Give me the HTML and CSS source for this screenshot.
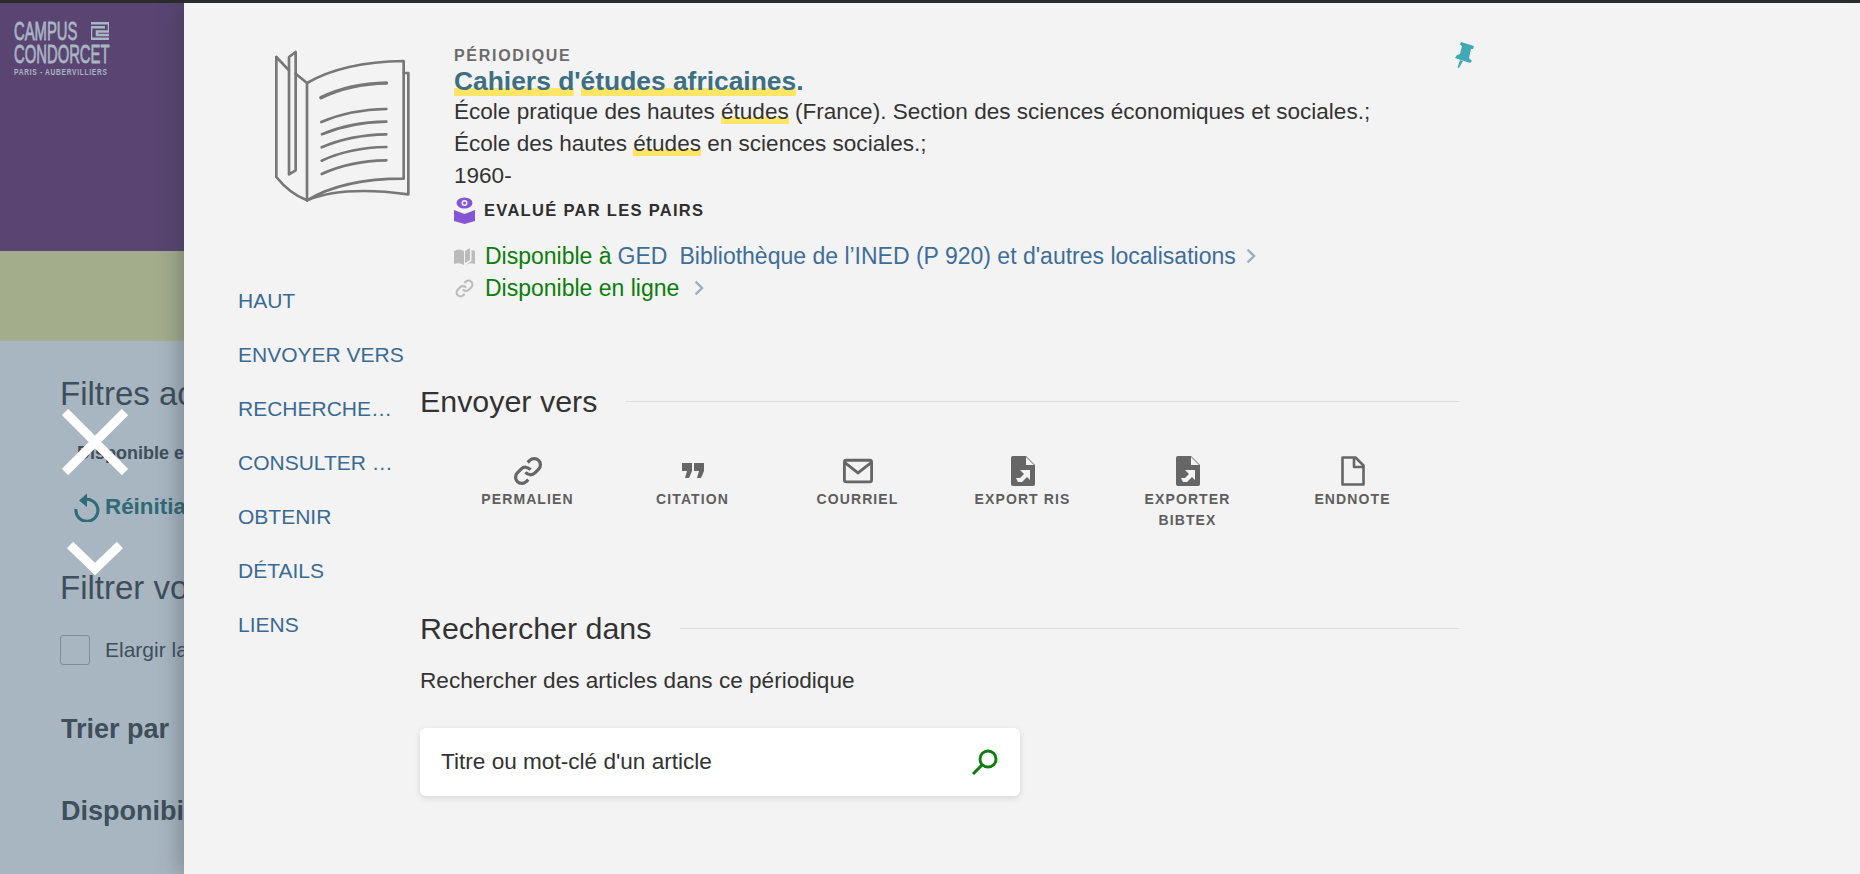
FILE: index.html
```html
<!DOCTYPE html>
<html lang="fr">
<head>
<meta charset="utf-8">
<title>Cahiers d'études africaines</title>
<link rel="stylesheet" href="styles.css">
</head>
<body>
<div class="backdrop">
  <div class="topbar"></div>
  <header class="brand">
    <div class="logo">
      <div class="logo-row"><span class="logo-campus">CAMPUS</span>
        <svg class="logo-mark" viewBox="0 0 18 18" fill="none" stroke="#a9b6c4" stroke-width="2.600"><path d="M0 1.300H18V9.500H6V13H18M0 5.300H14M0 5.300V16.700H18"/></svg>
      </div>
      <div class="logo-condorcet">CONDORCET</div>
      <div class="logo-sub">PARIS - AUBERVILLIERS</div>
    </div>
  </header>
  <div class="band"></div>
  <section class="filters">
    <h2 class="f-title">Filtres actifs</h2>
    <div class="f-chip">Disponible en ligne</div>
    <div class="f-reset">
      <svg class="f-reset-icon" viewBox="0 0 26 30" fill="none" stroke="#2f6a76" stroke-width="3"><path d="M8 8.500A11 11 0 1 1 2 17"/><path d="M13 1.500V15L5 8.500Z" fill="#2f6a76" stroke="none"/></svg>
      <span>Réinitialiser</span>
    </div>
    <h2 class="f-title f-title2">Filtrer vos résultats</h2>
    <label class="f-check"><span class="f-box"></span>Elargir la recherche</label>
    <div class="f-head f-sort">Trier par</div>
    <div class="f-head f-dispo">Disponibilité</div>
  </section>
</div>

<svg class="close-x" viewBox="0 0 66 66" stroke="#fff" stroke-width="9" fill="none"><path d="M3 3L63 63M63 3L3 63"/></svg>
<svg class="close-v" viewBox="0 0 56 34" stroke="#fff" stroke-width="9" fill="none"><path d="M3 3L28 27L53 3"/></svg>

<main class="panel">
  <div class="side">
    <svg class="book" viewBox="130 50 420 480" fill="none" stroke="#777" stroke-width="8" stroke-linejoin="round" stroke-linecap="round">
      <path d="M140 80V440Q180 490 232 510"/>
      <path d="M140 80L178 120"/>
      <path d="M178 80L198 65V420L178 432Z"/>
      <path d="M198 130L232 158V510"/>
      <path d="M232 158Q340 95 522 92V445Q340 445 232 510"/>
      <path d="M522 128H536V492Q340 465 232 510"/>
      <path d="M274 202Q360 160 470 158" stroke-width="11"/>
      <path d="M275 275Q360 238 470 236"/>
      <path d="M277 312Q360 276 470 274"/>
      <path d="M276 351Q360 314 470 312"/>
      <path d="M276 391Q360 352 470 350"/>
      <path d="M276 431Q360 392 470 390"/>
    </svg>
    <nav class="nav">
      <a class="nav-item">HAUT</a>
      <a class="nav-item">ENVOYER VERS</a>
      <a class="nav-item">RECHERCHER DANS</a>
      <a class="nav-item">CONSULTER EN LIGNE</a>
      <a class="nav-item">OBTENIR</a>
      <a class="nav-item">DÉTAILS</a>
      <a class="nav-item">LIENS</a>
    </nav>
  </div>

  <div class="content">
    <article class="record">
      <svg class="pin" viewBox="0 0 22 28" fill="#3fa9b5"><path d="M8 1L21 5L20 8L18 8L16 17L19 20L17 22L2 17L4 14L7 13L9 5L7 3.500Z"/><path d="M7 19L10 20L6 27L4.500 26.500Z"/></svg>
      <div class="rec-type">PÉRIODIQUE</div>
      <h1 class="rec-title"><mark>Cahiers d</mark>'<mark>études africaines</mark>.</h1>
      <div class="rec-line">École pratique des hautes <mark>études</mark> (France). Section des sciences économiques et sociales.;</div>
      <div class="rec-line">École des hautes <mark>études</mark> en sciences sociales.;</div>
      <div class="rec-line">1960-</div>
      <div class="peer">
        <svg class="peer-icon" viewBox="0 0 21 27"><path d="M0 13L10.500 17L21 13V24L10.500 27L0 24Z" fill="#8456d6"/><ellipse cx="10.500" cy="6" rx="8" ry="5.500" fill="#8456d6"/><circle cx="10.500" cy="6" r="3" fill="#f3f3f3"/><circle cx="10.500" cy="6" r="1.500" fill="#8456d6"/></svg>
        <span>EVALUÉ PAR LES PAIRS</span>
      </div>
      <div class="avail avail-first">
        <svg class="avail-icon" viewBox="0 0 21 17" fill="#bbb"><path d="M0 3Q5 0 10 3V17Q5 14 0 16Z"/><path d="M11 3L16 0V12L11 15Z"/><path d="M17.500 2L21 3V16Q16 14 11.500 17L17.500 13Z"/></svg>
        <span class="green">Disponible à</span><span class="blue ged">GED</span><span class="blue lib">Bibliothèque de l’INED (P 920) et d'autres localisations</span>
        <svg class="chev" viewBox="0 0 10 16" fill="none" stroke="#96afc4" stroke-width="2.400"><path d="M1.500 1.500L8 8L1.500 14.500"/></svg>
      </div>
      <div class="avail">
        <svg class="avail-icon avail-link" viewBox="0 0 24 24" fill="none" stroke="#bbb" stroke-width="2.600"><path d="M10 13a5 5 0 0 0 7.540.540l3-3a5 5 0 0 0-7.070-7.070l-1.720 1.710"/><path d="M14 11a5 5 0 0 0-7.540-.540l-3 3a5 5 0 0 0 7.070 7.070l1.710-1.710"/></svg>
        <span class="green">Disponible en ligne</span>
        <svg class="chev chev2" viewBox="0 0 10 16" fill="none" stroke="#96afc4" stroke-width="2.400"><path d="M1.500 1.500L8 8L1.500 14.500"/></svg>
      </div>
    </article>

    <section class="send">
      <h2 class="sec-head"><span>Envoyer vers</span></h2>
      <div class="actions">
        <div class="action">
          <svg class="act-icon" viewBox="0 0 24 24" fill="none" stroke="#666" stroke-width="2.600"><path d="M10 13a5 5 0 0 0 7.540.540l3-3a5 5 0 0 0-7.070-7.070l-1.720 1.710"/><path d="M14 11a5 5 0 0 0-7.540-.540l-3 3a5 5 0 0 0 7.070 7.070l1.710-1.710"/></svg>
          <span>PERMALIEN</span>
        </div>
        <div class="action">
          <svg class="act-icon" viewBox="-4 -7 30 30" fill="#666"><path d="M0 0H10V8L7 15H3L5 8H0Z"/><path d="M12 0H22V8L19 15H15L17 8H12Z"/></svg>
          <span>CITATION</span>
        </div>
        <div class="action">
          <svg class="act-icon" viewBox="0 0 32 32" fill="none" stroke="#666" stroke-width="3"><rect x="1.500" y="4.500" width="29" height="23" rx="2"/><path d="M2 7L16 18L30 7"/></svg>
          <span>COURRIEL</span>
        </div>
        <div class="action">
          <svg class="act-icon" viewBox="0 0 24 30"><path d="M2 0H15L24 9V28Q24 30 22 30H2Q0 30 0 28V2Q0 0 2 0Z" fill="#666"/><path d="M15 1L23 9H15Z" fill="#f3f3f3"/><path d="M9 14H19V24L16 21L11 26H7L5 22H9L13 18Z" fill="#f3f3f3"/></svg>
          <span>EXPORT RIS</span>
        </div>
        <div class="action">
          <svg class="act-icon" viewBox="0 0 24 30"><path d="M2 0H15L24 9V28Q24 30 22 30H2Q0 30 0 28V2Q0 0 2 0Z" fill="#666"/><path d="M15 1L23 9H15Z" fill="#f3f3f3"/><path d="M9 14H19V24L16 21L11 26H7L5 22H9L13 18Z" fill="#f3f3f3"/></svg>
          <span>EXPORTER BIBTEX</span>
        </div>
        <div class="action">
          <svg class="act-icon" viewBox="0 0 24 30" fill="none" stroke="#666" stroke-width="2.600" stroke-linejoin="round"><path d="M2.500 1.500H14.500L22.500 9.500V28.500H1.500V1.500Z"/><path d="M13 1.500V11H23"/></svg>
          <span>ENDNOTE</span>
        </div>
      </div>
    </section>

    <section class="search-sec">
      <h2 class="sec-head"><span>Rechercher dans</span></h2>
      <p class="search-hint">Rechercher des articles dans ce périodique</p>
      <div class="search-box">
        <span>Titre ou mot-clé d'un article</span>
        <svg class="search-icon" viewBox="0 0 27 27" fill="none" stroke="#0a7d0a" stroke-width="2.800"><circle cx="17" cy="10" r="8"/><path d="M11 16L2 25" stroke-width="3"/></svg>
      </div>
    </section>
  </div>
</main>
</body>
</html>
```
FILE: styles.css
```css
* { box-sizing: border-box; }
html, body { margin: 0; height: 874px; overflow: hidden; }
body { font-family: "Liberation Sans", Arial, sans-serif; color: #333; background: #a8b6c1; }

.backdrop { height: 874px; display: flex; flex-direction: column; }
.topbar { height: 3px; background: #2b2b2b; flex: none; }
.brand { height: 248px; flex: none; background: #5a4572; padding: 18px 0 0 14px; }
.band { height: 90px; flex: none; background: #a3ad8c; }
.filters { flex: 1; background: #a8b6c1; padding: 33px 0 0 60px; color: #3f4e5b; white-space: nowrap; }

.logo { color: #a9b6c4; width: 95px; }
.logo-row { display: flex; justify-content: space-between; align-items: center; height: 20px; }
.logo-campus, .logo-condorcet { font-size: 26px; line-height: 22px; font-weight: 400; transform: scaleX(.57); transform-origin: left center; -webkit-text-stroke: .8px #a9b6c4; white-space: nowrap; }
.logo-campus { width: 66px; }
.logo-mark { width: 18px; height: 18px; flex: none; }
.logo-condorcet { height: 22px; margin-top: 2px; }
.logo-sub { font-size: 9.500px; font-weight: 700; line-height: 11px; margin-top: 1px; white-space: nowrap; letter-spacing: 1px; transform: scaleX(.7); transform-origin: left center; }

.f-title { font-size: 33px; line-height: 40px; font-weight: 400; margin: 0; }
.f-chip { font-size: 18px; font-weight: 700; margin: 29px 0 0 17px; height: 36px; line-height: 20px; }
.f-reset { display: flex; align-items: center; gap: 5px; margin: 12px 0 0 14px; font-size: 22.400px; font-weight: 700; color: #2f6a76; height: 32px; }
.f-reset-icon { width: 26px; height: 30px; }
.f-title2 { margin-top: 45px; }
.f-check { display: flex; align-items: center; gap: 15px; margin-top: 27px; font-size: 21px; height: 30px; }
.f-box { width: 30px; height: 30px; border: 1px solid #7f8b95; border-radius: 3px; }
.f-head { font-size: 27px; font-weight: 700; line-height: 30px; margin-left: 1px; }
.f-sort { margin-top: 49px; }
.f-dispo { margin-top: 52px; }

.close-x { position: absolute; left: 62px; top: 409px; width: 66px; height: 66px; z-index: 3; }
.close-v { position: absolute; left: 67px; top: 542px; width: 56px; height: 34px; z-index: 3; }

.panel { position: absolute; left: 184px; top: 3px; right: 0; bottom: 0; z-index: 2; background: #f3f3f3; box-shadow: -6px 0 20px rgba(40, 50, 60, .3); display: flex; }
.side { width: 236px; flex: none; }
.book { display: block; width: 140px; height: 160px; margin: 44px 0 0 89px; }
.nav { margin-top: 67px; padding-left: 54px; display: flex; flex-direction: column; }
.nav-item { height: 54px; line-height: 54px; width: 167px; font-size: 21px; color: #3a6a94; overflow: hidden; text-overflow: ellipsis; white-space: nowrap; }

.content { width: 1039px; flex: none; }
.record { position: relative; margin-left: 34px; padding-top: 44px; }
.pin { position: absolute; left: 999px; top: 38px; width: 22px; height: 28px; }
.rec-type { font-size: 16px; line-height: 18px; font-weight: 700; letter-spacing: 1.700px; color: #6b6b6b; }
.rec-title { font-size: 26.400px; line-height: 30px; font-weight: 700; margin: 1px 0 0; color: #3d6f82; }
mark { background: linear-gradient(transparent 72%, #ffe566 72%); color: inherit; }
.rec-line { font-size: 22.550px; line-height: 32px; }
.peer { display: flex; align-items: center; gap: 9px; margin-top: 3px; height: 30px; font-size: 16.500px; font-weight: 700; letter-spacing: 1.300px; color: #2e2e2e; }
.peer-icon { width: 21px; height: 27px; }
.avail { display: flex; align-items: center; height: 32px; font-size: 23px; white-space: pre; }
.avail-first { margin-top: 15px; }
.avail-icon { width: 21px; height: 17px; margin: 0 10px 0 0; flex: none; }
.avail-link { width: 19px; height: 19px; margin: 0 11px 0 1px; }
.green { color: #0a7d0a; }
.blue { color: #3d6d99; }
.ged { margin-left: 6px; }
.lib { margin-left: 12px; }
.chev { width: 10px; height: 16px; margin-left: 10px; }
.chev2 { margin-left: 15px; }

.send { margin-top: 79px; }
.sec-head { display: flex; align-items: center; gap: 29px; margin: 0; font-size: 30.400px; line-height: 36px; font-weight: 400; color: #333; white-space: nowrap; }
.sec-head::after { content: ""; flex: 1; height: 1px; background: #dcdcdc; }
.actions { display: flex; padding: 37px 0 0 25px; }
.action { width: 165px; display: flex; flex-direction: column; align-items: center; text-align: center; font-size: 14px; font-weight: 700; letter-spacing: 1.100px; line-height: 21px; color: #5e5e5e; padding: 0 30px; }
.act-icon { width: 30px; height: 30px; flex: none; margin-bottom: 3px; }

.search-sec { margin-top: 79px; }
.search-hint { font-size: 22.600px; line-height: 30px; margin: 20px 0 0; }
.search-box { width: 600px; height: 68px; margin-top: 32px; background: #fff; border-radius: 6px; box-shadow: 0 2px 6px rgba(0, 0, 0, .12); display: flex; align-items: center; justify-content: space-between; padding: 0 22px 0 21px; font-size: 22.600px; color: #333; }
.search-icon { width: 27px; height: 27px; }
```
